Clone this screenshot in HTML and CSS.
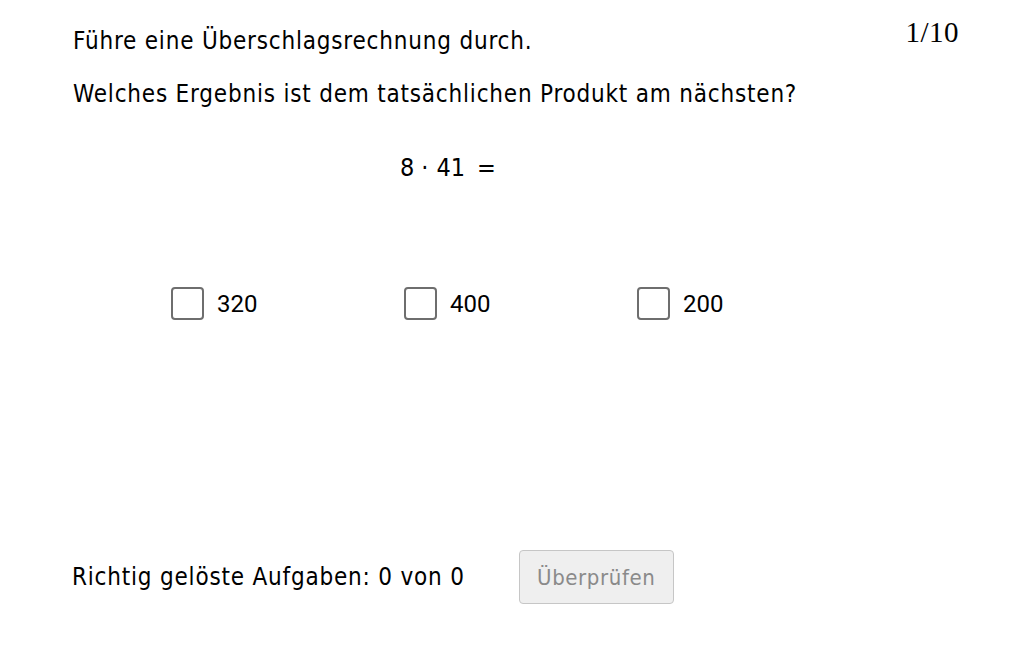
FILE: index.html
```html
<!DOCTYPE html>
<html lang="de">
<head>
<meta charset="utf-8">
<link rel="stylesheet" href="styles.css">
</head>
<body>
<div class="page">
  <div class="head">
    <p class="line">Führe eine Überschlagsrechnung durch.</p>
    <span class="counter">1/10</span>
  </div>
  <p class="line second">Welches Ergebnis ist dem tatsächlichen Produkt am nächsten?</p>
  <div class="eq"><span>8</span><span class="op">·</span><span>41</span><span class="rel">=</span></div>
  <div class="options">
    <label class="opt"><span class="box"></span><span class="val">320</span></label>
    <label class="opt"><span class="box"></span><span class="val">400</span></label>
    <label class="opt"><span class="box"></span><span class="val">200</span></label>
  </div>
  <div class="footer">
    <span class="score">Richtig gelöste Aufgaben: 0 von 0</span>
    <button class="check">Überprüfen</button>
  </div>
</div>
</body>
</html>
```
FILE: styles.css
```css
html, body { margin: 0; padding: 0; background: #fff; }
body { width: 1032px; height: 645px; overflow: hidden; color: #000; }
.page { padding: 26px 74px 0 73px; font-family: "DejaVu Sans Condensed", "Liberation Sans", sans-serif; font-size: 24px; letter-spacing: 0.8px; }
.head { display: flex; justify-content: space-between; align-items: flex-start; }
.line { margin: 0; line-height: 30px; }
.second { margin-top: 23px; }
.counter { font-family: "Liberation Serif", serif; font-size: 29px; letter-spacing: 0.5px; margin-top: -10px; margin-right: -1px; }
.eq { display: flex; margin-top: 44px; padding-left: 327px; line-height: 30px; font-size: 25px; letter-spacing: 0; }
.eq .op { margin: 0 8px 0 7px; }
.eq .rel { margin-left: 12px; }
.options { display: flex; margin-top: 104px; padding-left: 98px; letter-spacing: 0; }
.opt { display: flex; align-items: center; width: 233px; font-family: Roboto, sans-serif; font-size: 24px; }
.box { width: 29px; height: 29px; border: 2px solid #6e6e6e; border-radius: 4px; margin-right: 13px; }
.footer { display: flex; align-items: center; margin-top: 230px; margin-left: -1px; }
.score { line-height: 30px; }
.check { margin-left: 54px; width: 155px; height: 54px; border: 1px solid #c6c6c6; border-radius: 4px; background: #efefef; color: #8a8a8a; font-family: "DejaVu Sans Condensed", sans-serif; font-size: 22px; letter-spacing: 0.6px; }
```
